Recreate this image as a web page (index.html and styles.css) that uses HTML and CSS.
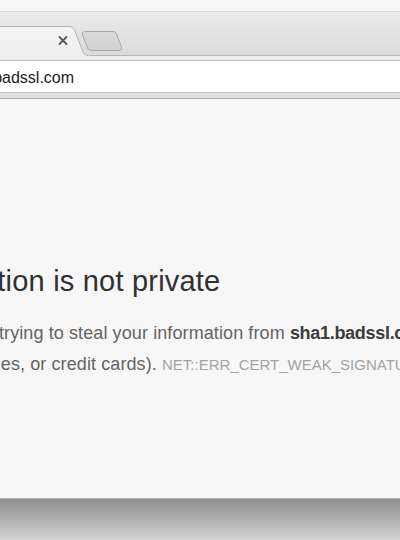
FILE: index.html
```html
<!DOCTYPE html>
<html lang="en">
<head>
<meta charset="utf-8">
<title>Privacy error</title>
<link rel="stylesheet" href="styles.css">
</head>
<body>
<div class="window">
  <div class="title-top"></div>
  <div class="tabstrip">
    <svg class="tabs" width="400" height="44" viewBox="0 0 400 44" aria-hidden="true">
      <defs>
        <linearGradient id="tabfill" x1="0" y1="0" x2="0" y2="1">
          <stop offset="0" stop-color="#f5f5f5"/>
          <stop offset="1" stop-color="#eeeeee"/>
        </linearGradient>
        <linearGradient id="newfill" x1="0" y1="0" x2="0" y2="1">
          <stop offset="0" stop-color="#dadada"/>
          <stop offset="1" stop-color="#d2d2d2"/>
        </linearGradient>
      </defs>
      <line x1="84" y1="43.5" x2="400" y2="43.5" stroke="#b6b6b6" stroke-width="1"/>
      <path d="M -4 44 L -4 14.5 L 69 14.5 Q 73 14.5 74.5 18 L 83 40 Q 84.5 43.5 88 43.5 L 90 44 Z" fill="url(#tabfill)"/>
      <path d="M -4 14.5 L 69 14.5 Q 73 14.5 74.5 18 L 83 40 Q 84.5 43.5 88 43.5" fill="none" stroke="#b4b4b4" stroke-width="1"/>
      <path d="M 84.5 19.5 L 113 19.5 Q 115.5 19.5 116.5 22 L 121.5 35 Q 122.5 38.5 119 38.5 L 91 38.5 Q 88.5 38.5 87.5 36 L 82.5 23 Q 81.5 19.5 84.5 19.5 Z" fill="url(#newfill)" stroke="#a9a9a9" stroke-width="1"/>
      <path d="M 59.5 25 L 66.5 32 M 66.5 25 L 59.5 32" stroke="#5a5a5a" stroke-width="1.8" stroke-linecap="round"/>
    </svg>
  </div>
  <div class="toolbar">
    <div class="omnibox"><span class="url">sha1.badssl.com</span></div>
    <div class="toolbar-base"></div>
  </div>
  <main class="page">
    <div class="content">
      <h1 class="heading">Your connection is not private</h1>
      <p class="message"><span class="line">Attackers might be trying to steal your information from <strong class="host">sha1.badssl.com</strong> (for example,</span> <span class="line line-second">passwords, messages, or credit cards). <span class="error-code">NET::ERR_CERT_WEAK_SIGNATURE_ALGORITHM</span></span></p>
    </div>
  </main>
  <div class="shadow"></div>
</div>
</body>
</html>
```

FILE: styles.css
```css
html, body {
  margin: 0;
  padding: 0;
}

body {
  width: 400px;
  height: 540px;
  overflow: hidden;
  background: #d4d4d4;
  font-family: "Liberation Sans", Arial, sans-serif;
}

.window {
  width: 400px;
  height: 540px;
  display: flex;
  flex-direction: column;
  overflow: hidden;
}

.title-top {
  height: 11px;
  flex: none;
  background: #f6f6f6;
  border-bottom: 1px solid #d9d9d9;
}

.tabstrip {
  height: 44px;
  flex: none;
  background: linear-gradient(#eaeaea, #dbdbdb);
}

.tabs {
  display: block;
}

.toolbar {
  flex: none;
  background: #efefef;
  padding-top: 4px;
}

.omnibox {
  height: 31px;
  background: #ffffff;
  border-top: 1px solid #bababa;
  border-bottom: 1px solid #c9c9c9;
  display: flex;
  align-items: center;
  overflow: hidden;
  white-space: nowrap;
}

.url {
  margin-left: -46px;
  font-size: 16px;
  color: #222222;
  padding-top: 2px;
}

.toolbar-base {
  height: 5px;
  background: #e0e0e0;
  border-bottom: 1px solid #ababab;
}

.page {
  height: 400px;
  flex: none;
  background: #f7f7f7;
  border-bottom: 1px solid #b4b4b4;
  padding-top: 164px;
  box-sizing: border-box;
  overflow: hidden;
}

.content {
  width: 1200px;
}

.heading {
  margin: 0 0 19px -165px;
  font-size: 29px;
  line-height: 36px;
  letter-spacing: 0.2px;
  font-weight: normal;
  color: #303030;
  white-space: nowrap;
}

.message {
  margin: 0 0 0 -157px;
  font-size: 18px;
  line-height: 31px;
  letter-spacing: 0.1px;
  color: #646464;
  white-space: nowrap;
}

.line {
  display: block;
}

.line-second {
  margin-left: -3px;
}

.host {
  color: #3c3c3c;
  font-weight: bold;
  letter-spacing: -0.3px;
}

.error-code {
  font-size: 15px;
  letter-spacing: 0;
  color: #a3a3a3;
}

.shadow {
  flex: 1;
  background: linear-gradient(#8e8e8e, #d3d3d3);
}
```
